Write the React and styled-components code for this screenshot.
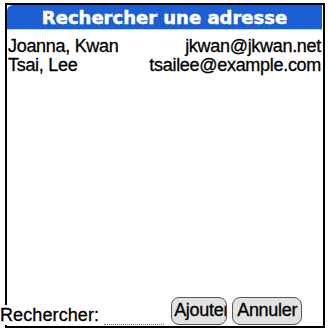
import React from 'react';
import styled, { createGlobalStyle } from 'styled-components';

const contacts = [
    { name: 'Joanna, Kwan', email: 'jkwan@jkwan.net' },
    { name: 'Tsai, Lee', email: 'tsailee@example.com' },
];

const App = () => {
    return (
        <>
            <GlobalStyle />
            <Screen>
                <Frame>
                    <TitleBar>Rechercher une adresse</TitleBar>
                    <List>
                        {contacts.map(c => (
                            <Row key={c.email}>
                                <span>{c.name}</span>
                                <span>{c.email}</span>
                            </Row>
                        ))}
                    </List>
                    <Footer>
                        <Label>Rechercher:</Label>
                        <Field />
                        <Button $width={56} $align="left">Ajouter</Button>
                        <Button $width={70}>Annuler</Button>
                    </Footer>
                </Frame>
            </Screen>
        </>
    );
};

export default App;

// Styled Components
const GlobalStyle = createGlobalStyle`
  html, body {
    margin: 0;
    padding: 0;
    background: #fff;
  }
  body {
    font-family: "Liberation Sans", Arial, sans-serif;
    color: #000;
  }
`;

const Screen = styled.div`
  width: 328px;
  height: 329px;
  padding: 3px 3px 1px 5px;
  box-sizing: border-box;
  display: flex;
  overflow: hidden;
`;

const Frame = styled.div`
  flex: 1;
  display: flex;
  flex-direction: column;
  border: 2px solid #000;
`;

const TitleBar = styled.div`
  height: 24px;
  margin-right: 1px;
  background: #1b5fd2;
  border-top-left-radius: 6px;
  border-bottom: 1px solid #a9d9f2;
  color: #fff;
  font-family: "DejaVu Sans", Verdana, sans-serif;
  font-weight: bold;
  font-size: 18px;
  line-height: 25px;
  text-align: center;
  -webkit-text-stroke: 0.5px #fff;
`;

const List = styled.div`
  flex: 1;
  display: flex;
  flex-direction: column;
  padding: 7px 2px 0 1px;
`;

const Row = styled.div`
  display: flex;
  justify-content: space-between;
  font-size: 18px;
  line-height: 19px;
  letter-spacing: -0.3px;
  -webkit-text-stroke: 0.3px #000;
`;

const Footer = styled.div`
  display: flex;
  align-items: flex-end;
  margin-left: -7px;
  padding-bottom: 1px;
`;

const Label = styled.span`
  background: #fff;
  font-size: 18px;
  line-height: 20px;
  letter-spacing: 0.1px;
  -webkit-text-stroke: 0.3px #000;
`;

const Field = styled.div`
  width: 60px;
  height: 1px;
  margin: 0 2px 0 5px;
  border-bottom: 1px dotted #777;
`;

const Button = styled.div`
  width: ${p => p.$width}px;
  height: 28px;
  box-sizing: border-box;
  margin-left: 5px;
  padding: 0 1px 0 ${p => (p.$align === 'left' ? 2 : 1)}px;
  border: 1.5px solid #555;
  border-radius: 8px;
  background: #e2e2e2;
  font-size: 18px;
  line-height: 25px;
  letter-spacing: -0.3px;
  text-align: ${p => p.$align || 'center'};
  white-space: nowrap;
  overflow: hidden;
  -webkit-text-stroke: 0.3px #000;
  &:first-of-type {
    margin-left: 0;
  }
`;
